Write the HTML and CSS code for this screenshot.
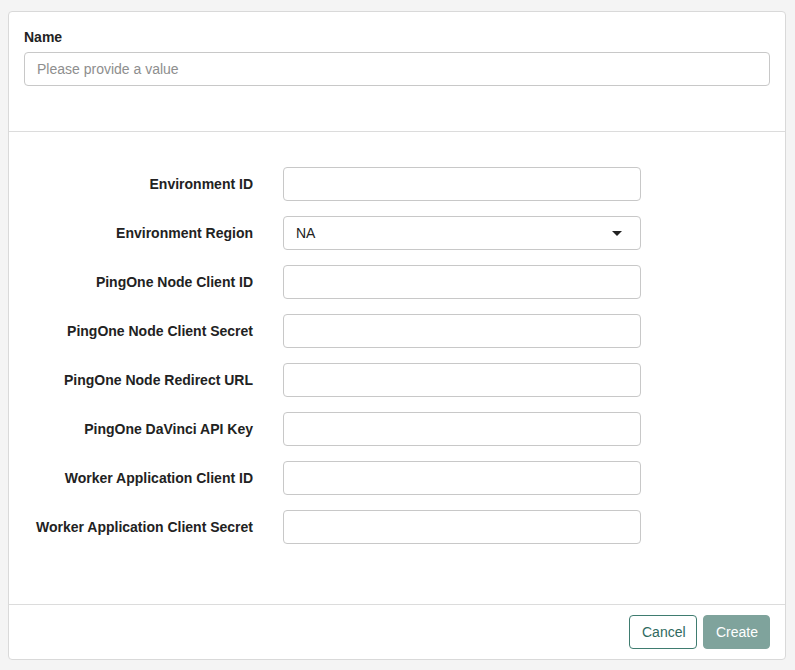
FILE: index.html
```html
<!DOCTYPE html>
<html>
<head>
<meta charset="utf-8">
<link rel="stylesheet" href="styles.css">
</head>
<body>
<div class="card">
  <div class="top">
    <label class="name-label">Name</label>
    <div class="input wide placeholder">Please provide a value</div>
  </div>
  <div class="form">
    <div class="row"><label class="lbl">Environment ID</label><div class="input"></div></div>
    <div class="row"><label class="lbl">Environment Region</label><div class="input select"><span>NA</span><span class="caret"></span></div></div>
    <div class="row"><label class="lbl">PingOne Node Client ID</label><div class="input"></div></div>
    <div class="row"><label class="lbl">PingOne Node Client Secret</label><div class="input"></div></div>
    <div class="row"><label class="lbl">PingOne Node Redirect URL</label><div class="input"></div></div>
    <div class="row"><label class="lbl">PingOne DaVinci API Key</label><div class="input"></div></div>
    <div class="row"><label class="lbl">Worker Application Client ID</label><div class="input"></div></div>
    <div class="row"><label class="lbl">Worker Application Client Secret</label><div class="input"></div></div>
  </div>
  <div class="footer">
    <button class="btn cancel">Cancel</button>
    <button class="btn create">Create</button>
  </div>
</div>
</body>
</html>
```
FILE: styles.css
```css
html, body {
  margin: 0;
  padding: 0;
  background: #f4f4f4;
  font-family: "Liberation Sans", Arial, sans-serif;
  color: #333;
}
body {
  padding: 11px 9px 0 8px;
}
.card {
  background: #fff;
  border: 1px solid #d9d9d9;
  border-radius: 4px;
  box-sizing: border-box;
  height: 649px;
  display: flex;
  flex-direction: column;
}
.top {
  padding: 18px 15px 45px 15px;
  border-bottom: 1px solid #dcdcdc;
}
.name-label {
  display: block;
  font-size: 14px;
  font-weight: bold;
  color: #222;
  line-height: 15px;
  margin-bottom: 7px;
}
.input {
  box-sizing: border-box;
  height: 34px;
  width: 358px;
  border: 1px solid #c8c8c8;
  border-radius: 4px;
  background: #fff;
  font-size: 14px;
  padding: 0 12px;
  display: flex;
  align-items: center;
}
.input.wide {
  width: 100%;
}
.placeholder {
  color: #8e8e8e;
}
.form {
  flex: 1;
  padding-top: 35px;
  display: flex;
  flex-direction: column;
  gap: 15px;
  border-bottom: 1px solid #dcdcdc;
}
.row {
  display: flex;
  align-items: center;
}
.lbl {
  width: 244px;
  text-align: right;
  font-size: 14px;
  font-weight: bold;
  color: #222;
  margin-right: 30px;
  white-space: nowrap;
}
.select {
  justify-content: space-between;
  color: #222;
}
.caret {
  width: 0;
  height: 0;
  border-left: 5px solid transparent;
  border-right: 5px solid transparent;
  border-top: 5px solid #222;
  margin-right: 6px;
}
.footer {
  height: 54px;
  display: flex;
  justify-content: flex-end;
  align-items: center;
  gap: 6px;
  padding-right: 15px;
}
.btn {
  font-family: "Liberation Sans", Arial, sans-serif;
  font-size: 14px;
  height: 34px;
  border-radius: 4px;
  padding: 0 12px;
  box-sizing: border-box;
}
.cancel {
  background: #fff;
  border: 1px solid #3f7c70;
  color: #2f6a60;
  width: 68px;
}
.create {
  background: #7fa39c;
  border: 1px solid #7fa39c;
  color: #fff;
  width: 67px;
}
```
